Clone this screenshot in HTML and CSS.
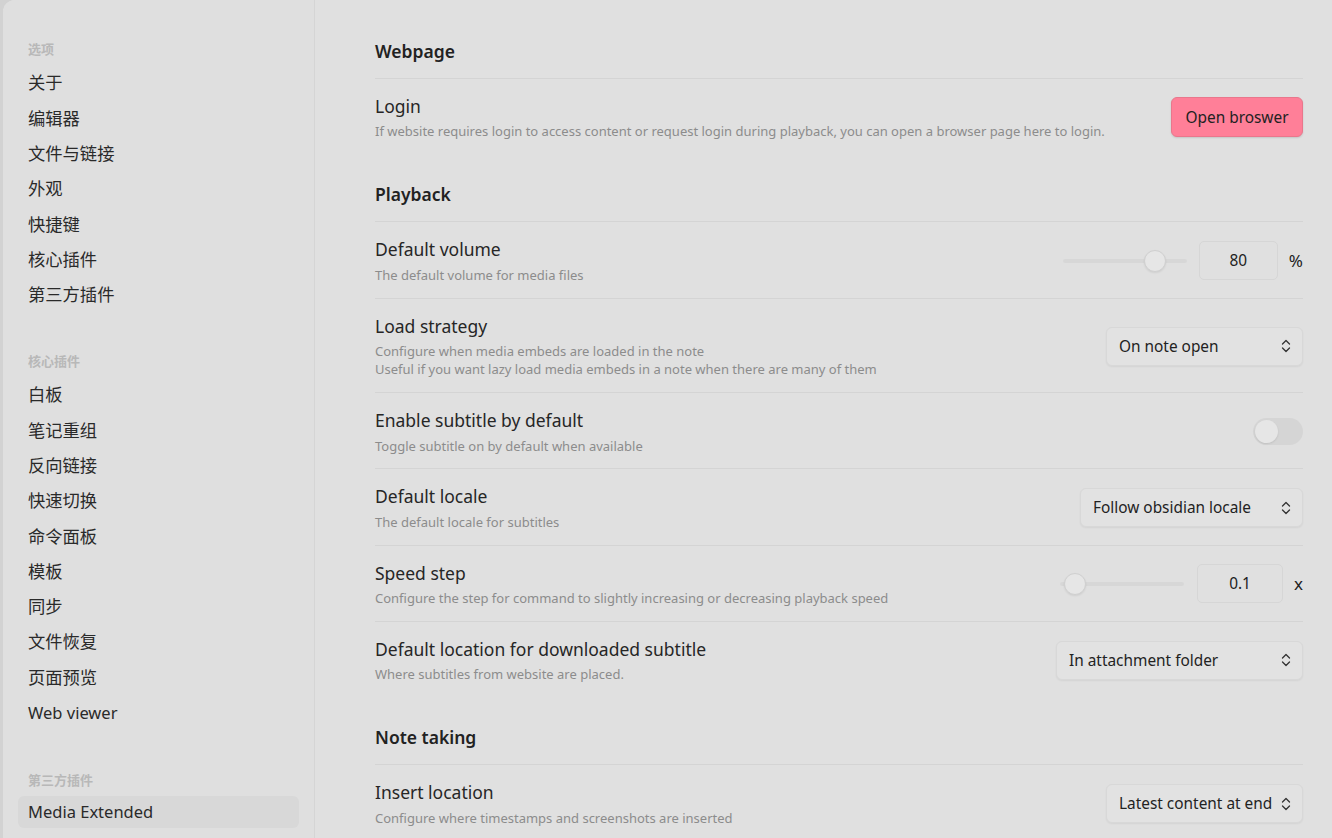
FILE: index.html
```html
<!DOCTYPE html>
<html lang="zh">
<head>
<meta charset="utf-8">
<title>Settings</title>
<link rel="stylesheet" href="styles.css">
</head>
<body>
<div class="modal">
  <nav class="sidebar">
    <div class="nav-group">
      <div class="nav-title">选项</div>
      <div class="nav-item">关于</div>
      <div class="nav-item">编辑器</div>
      <div class="nav-item">文件与链接</div>
      <div class="nav-item">外观</div>
      <div class="nav-item">快捷键</div>
      <div class="nav-item">核心插件</div>
      <div class="nav-item">第三方插件</div>
    </div>
    <div class="nav-group">
      <div class="nav-title">核心插件</div>
      <div class="nav-item">白板</div>
      <div class="nav-item">笔记重组</div>
      <div class="nav-item">反向链接</div>
      <div class="nav-item">快速切换</div>
      <div class="nav-item">命令面板</div>
      <div class="nav-item">模板</div>
      <div class="nav-item">同步</div>
      <div class="nav-item">文件恢复</div>
      <div class="nav-item">页面预览</div>
      <div class="nav-item lat">Web viewer</div>
    </div>
    <div class="nav-group">
      <div class="nav-title">第三方插件</div>
      <div class="nav-item lat active">Media Extended</div>
    </div>
  </nav>
  <main class="content">
    <div class="heading">Webpage</div>
    <div class="item">
      <div class="info">
        <div class="name">Login</div>
        <div class="desc">If website requires login to access content or request login during playback, you can open a browser page here to login.</div>
      </div>
      <div class="control"><button class="cta">Open broswer</button></div>
    </div>

    <div class="heading">Playback</div>
    <div class="item">
      <div class="info">
        <div class="name">Default volume</div>
        <div class="desc">The default volume for media files</div>
      </div>
      <div class="control">
        <div class="slider"><div class="track"></div><div class="thumb" style="left: 74%"></div></div>
        <div class="num num-vol">80</div>
        <span class="unit">%</span>
      </div>
    </div>
    <div class="item">
      <div class="info">
        <div class="name">Load strategy</div>
        <div class="desc">Configure when media embeds are loaded in the note<br>Useful if you want lazy load media embeds in a note when there are many of them</div>
      </div>
      <div class="control">
        <div class="dropdown w-note">On note open<svg class="chev" viewBox="0 0 10 14" width="10" height="14"><path d="M1.5 5 L5 1.5 L8.5 5 M1.5 9 L5 12.5 L8.5 9" fill="none" stroke="#333" stroke-width="1.3" stroke-linecap="round" stroke-linejoin="round"/></svg></div>
      </div>
    </div>
    <div class="item">
      <div class="info">
        <div class="name">Enable subtitle by default</div>
        <div class="desc">Toggle subtitle on by default when available</div>
      </div>
      <div class="control"><div class="toggle"><div class="knob"></div></div></div>
    </div>
    <div class="item">
      <div class="info">
        <div class="name">Default locale</div>
        <div class="desc">The default locale for subtitles</div>
      </div>
      <div class="control">
        <div class="dropdown w-locale">Follow obsidian locale<svg class="chev" viewBox="0 0 10 14" width="10" height="14"><path d="M1.5 5 L5 1.5 L8.5 5 M1.5 9 L5 12.5 L8.5 9" fill="none" stroke="#333" stroke-width="1.3" stroke-linecap="round" stroke-linejoin="round"/></svg></div>
      </div>
    </div>
    <div class="item">
      <div class="info">
        <div class="name">Speed step</div>
        <div class="desc">Configure the step for command to slightly increasing or decreasing playback speed</div>
      </div>
      <div class="control">
        <div class="slider"><div class="track"></div><div class="thumb" style="left: 12%"></div></div>
        <div class="num num-speed">0.1</div>
        <span class="unit unit-x">x</span>
      </div>
    </div>
    <div class="item">
      <div class="info">
        <div class="name">Default location for downloaded subtitle</div>
        <div class="desc">Where subtitles from website are placed.</div>
      </div>
      <div class="control">
        <div class="dropdown w-attach">In attachment folder<svg class="chev" viewBox="0 0 10 14" width="10" height="14"><path d="M1.5 5 L5 1.5 L8.5 5 M1.5 9 L5 12.5 L8.5 9" fill="none" stroke="#333" stroke-width="1.3" stroke-linecap="round" stroke-linejoin="round"/></svg></div>
      </div>
    </div>

    <div class="heading">Note taking</div>
    <div class="item">
      <div class="info">
        <div class="name">Insert location</div>
        <div class="desc">Configure where timestamps and screenshots are inserted</div>
      </div>
      <div class="control">
        <div class="dropdown w-note">Latest content at end<svg class="chev" viewBox="0 0 10 14" width="10" height="14"><path d="M1.5 5 L5 1.5 L8.5 5 M1.5 9 L5 12.5 L8.5 9" fill="none" stroke="#333" stroke-width="1.3" stroke-linecap="round" stroke-linejoin="round"/></svg></div>
      </div>
    </div>
  </main>
</div>
</body>
</html>
```

FILE: styles.css
```css
* { box-sizing: border-box; }
html, body {
  margin: 0;
  padding: 0;
  height: 100%;
  overflow: hidden;
}
body {
  background: #d2d2d2;
  font-family: "Noto Sans", "Noto Sans CJK SC", sans-serif;
  color: #222;
}
.modal {
  margin-left: 3px;
  height: 100%;
  display: flex;
  background: #e0e0e0;
  border-top-left-radius: 12px;
  overflow: hidden;
}
.sidebar {
  width: 312px;
  flex: none;
  background: #dfdfdf;
  border-right: 1px solid #d5d5d5;
  padding: 38px 15px 0 15px;
  display: flex;
  flex-direction: column;
  gap: 37.5px;
}
.nav-group:last-child {
  margin-top: 1px;
}
.nav-title {
  font-size: 13px;
  font-weight: 600;
  color: #b8b8b8;
  line-height: 22px;
  padding-left: 10px;
  margin-bottom: 5.4px;
}
.nav-item {
  font-size: 17.3px;
  line-height: 35.3px;
  height: 35.3px;
  padding: 0 10px;
  color: #2a2a2a;
  border-radius: 6px;
  overflow: hidden;
}
.nav-item.lat {
  font-size: 16.5px;
}
.nav-item.active {
  background: #d8d8d8;
  height: 32px;
  line-height: 32px;
  margin-top: 2.6px;
}
.content {
  flex: 1;
  padding: 11px 29px 0 60px;
}
.heading {
  font-size: 17.5px;
  font-weight: 600;
  line-height: 24px;
  padding: 28px 0 15px;
  color: #222;
}
.item {
  display: flex;
  align-items: center;
  border-top: 1px solid #d4d4d4;
  padding: 15px 0 13.7px;
}
.info { flex: 1; }
.name {
  font-size: 17.5px;
  line-height: 24.4px;
  color: #262626;
}
.desc {
  font-size: 13px;
  line-height: 18.2px;
  padding-top: 4px;
  color: #8c8c8c;
}
.control {
  display: flex;
  align-items: center;
  flex: none;
}
.cta {
  font-family: inherit;
  font-size: 15.4px;
  color: #222;
  background: #ff7f98;
  border: 1px solid #e9778c;
  border-radius: 6px;
  height: 40px;
  width: 132px;
  padding: 0;
  box-shadow: 0 1px 2px rgba(0,0,0,0.12);
}
.slider {
  position: relative;
  width: 124px;
  height: 24px;
}
.track {
  position: absolute;
  left: 0;
  right: 0;
  top: 10px;
  height: 4px;
  border-radius: 2px;
  background: #d7d7d7;
}
.thumb {
  position: absolute;
  top: 1px;
  width: 22px;
  height: 22px;
  margin-left: -11px;
  border-radius: 50%;
  background: #e6e6e6;
  border: 1px solid #d0d0d0;
  box-shadow: 0 1px 2px rgba(0,0,0,0.08);
}
.num {
  height: 39px;
  border: 1px solid #d6d6d6;
  border-radius: 5px;
  display: flex;
  align-items: center;
  justify-content: center;
  font-size: 15.4px;
  color: #222;
}
.num-vol { width: 79px; margin-left: 12px; margin-right: 11px; }
.num-speed { width: 86px; margin-left: 13px; margin-right: 11px; }
.unit { font-size: 17px; color: #222; }
.unit-x { font-size: 17px; }
.dropdown {
  display: flex;
  align-items: center;
  justify-content: space-between;
  height: 39px;
  padding: 0 11px 0 12px;
  font-size: 15.4px;
  color: #222;
  background: #e2e2e2;
  border: 1px solid #d8d8d8;
  border-radius: 6px;
  box-shadow: 0 1px 2px rgba(0,0,0,0.06);
}
.chev { flex: none; }
.w-note { width: 197px; }
.w-locale { width: 223px; }
.w-attach { width: 247px; }
.toggle {
  width: 50px;
  height: 27px;
  border-radius: 14px;
  background: #d5d5d5;
  padding: 2px;
}
.knob {
  width: 23px;
  height: 23px;
  border-radius: 50%;
  background: #e6e6e6;
  box-shadow: 0 1px 2px rgba(0,0,0,0.1);
}
```
